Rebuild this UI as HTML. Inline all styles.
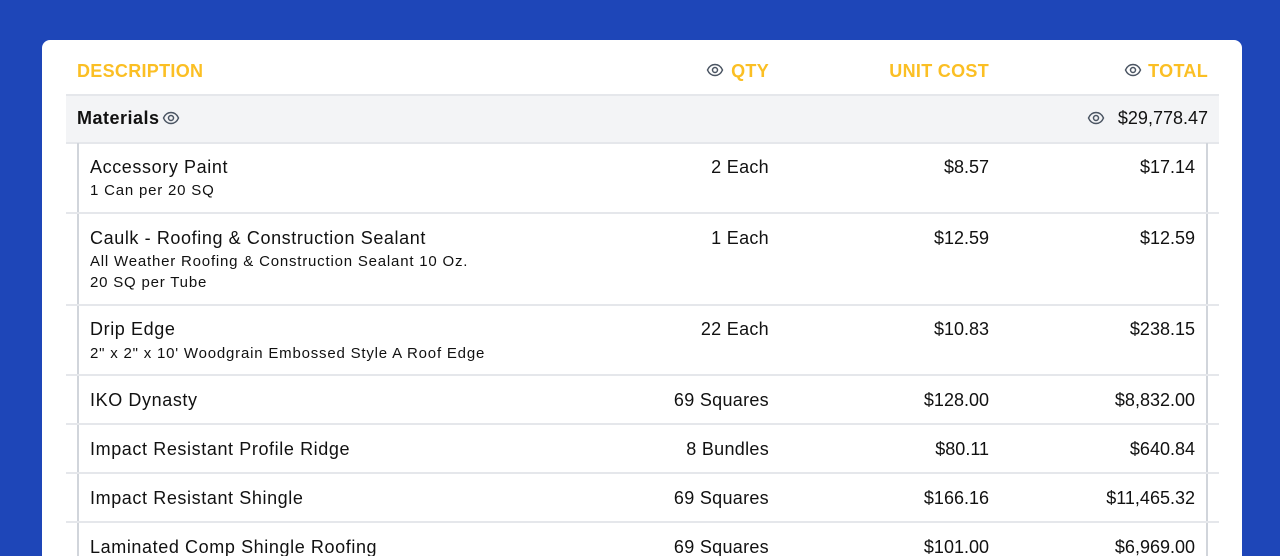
<!DOCTYPE html>
<html style="height:556px;overflow:hidden"><head><meta charset="utf-8"><style>
*{margin:0;padding:0;box-sizing:border-box}
body{width:1280px;height:556px;overflow:hidden;background:#1e46b8;font-family:"Liberation Sans",Arial,sans-serif;color:#111;position:relative}
.card{position:absolute;left:42px;top:40px;width:1200px;height:516px;background:#fff;border-radius:8px 8px 0 0}
.a{position:absolute;white-space:nowrap}
.h{font-weight:bold;font-size:18px;color:#fbbf24;top:61px;letter-spacing:0.3px}
.line{position:absolute;left:66px;width:1153px;height:2px;background:#e5e7eb}
.m{font-size:18px;letter-spacing:0.6px}
.s{font-size:15px;letter-spacing:0.8px}
.a.r{text-align:right;letter-spacing:0}
.a.r.q{letter-spacing:0.3px}
.a.h.r{letter-spacing:0.3px}
svg.eye{position:absolute}
</style></head><body>
<svg width="0" height="0" style="position:absolute"><defs><g id="e"><path d="M1.5 9C3.2 5 5.8 3.5 9 3.5s5.8 1.5 7.5 5.5C14.8 13 12.2 14.5 9 14.5S3.2 13 1.5 9z" fill="none" stroke="#4b5563" stroke-width="1.5"/><circle cx="9" cy="9" r="2.5" fill="none" stroke="#4b5563" stroke-width="1.5"/></g></defs></svg>
<div class="card"></div>
<div class="a h" style="left:77px">DESCRIPTION</div>
<svg class="eye" style="left:706px;top:61px" width="18" height="18"><use href="#e"/></svg>
<div class="a h r" style="right:511px">QTY</div>
<div class="a h r" style="right:291px">UNIT COST</div>
<svg class="eye" style="left:1124px;top:61px" width="18" height="18"><use href="#e"/></svg>
<div class="a h r" style="right:72px">TOTAL</div>
<div class="line" style="top:94px"></div>
<div class="a" style="left:66px;top:96px;width:1153px;height:47px;background:#f3f4f6"></div>
<div class="a m" style="left:77px;top:108px;font-weight:bold;letter-spacing:0.5px">Materials</div>
<svg class="eye" style="left:162px;top:109px" width="18" height="18"><use href="#e"/></svg>
<svg class="eye" style="left:1087px;top:109px" width="18" height="18"><use href="#e"/></svg>
<div class="a m r" style="right:72px;top:108px">$29,778.47</div>
<div class="line" style="top:142px"></div>
<div class="a" style="left:77px;top:143px;width:2px;height:413px;background:#d1d5db"></div>
<div class="a" style="left:1206px;top:143px;width:2px;height:413px;background:#d1d5db"></div>

<div class="a m" style="left:90px;top:157px">Accessory Paint</div>
<div class="a s" style="left:90px;top:182px">1 Can per 20 SQ</div>
<div class="a m r q" style="right:511px;top:157px">2 Each</div>
<div class="a m r" style="right:291px;top:157px">$8.57</div>
<div class="a m r" style="right:85px;top:157px">$17.14</div>
<div class="line" style="top:212px"></div>

<div class="a m" style="left:90px;top:228px">Caulk - Roofing &amp; Construction Sealant</div>
<div class="a s" style="left:90px;top:253px">All Weather Roofing &amp; Construction Sealant 10 Oz.</div>
<div class="a s" style="left:90px;top:274px">20 SQ per Tube</div>
<div class="a m r q" style="right:511px;top:228px">1 Each</div>
<div class="a m r" style="right:291px;top:228px">$12.59</div>
<div class="a m r" style="right:85px;top:228px">$12.59</div>
<div class="line" style="top:304px"></div>

<div class="a m" style="left:90px;top:319px">Drip Edge</div>
<div class="a s" style="left:90px;top:345px">2" x 2" x 10' Woodgrain Embossed Style A Roof Edge</div>
<div class="a m r q" style="right:511px;top:319px">22 Each</div>
<div class="a m r" style="right:291px;top:319px">$10.83</div>
<div class="a m r" style="right:85px;top:319px">$238.15</div>
<div class="line" style="top:374px"></div>

<div class="a m" style="left:90px;top:390px">IKO Dynasty</div>
<div class="a m r q" style="right:511px;top:390px">69 Squares</div>
<div class="a m r" style="right:291px;top:390px">$128.00</div>
<div class="a m r" style="right:85px;top:390px">$8,832.00</div>
<div class="line" style="top:423px"></div>

<div class="a m" style="left:90px;top:439px">Impact Resistant Profile Ridge</div>
<div class="a m r q" style="right:511px;top:439px">8 Bundles</div>
<div class="a m r" style="right:291px;top:439px">$80.11</div>
<div class="a m r" style="right:85px;top:439px">$640.84</div>
<div class="line" style="top:472px"></div>

<div class="a m" style="left:90px;top:488px">Impact Resistant Shingle</div>
<div class="a m r q" style="right:511px;top:488px">69 Squares</div>
<div class="a m r" style="right:291px;top:488px">$166.16</div>
<div class="a m r" style="right:85px;top:488px">$11,465.32</div>
<div class="line" style="top:521px"></div>

<div class="a m" style="left:90px;top:537px;height:19px;overflow:hidden">Laminated Comp Shingle Roofing</div>
<div class="a m r q" style="right:511px;top:537px;height:19px;overflow:hidden">69 Squares</div>
<div class="a m r" style="right:291px;top:537px;height:19px;overflow:hidden">$101.00</div>
<div class="a m r" style="right:85px;top:537px;height:19px;overflow:hidden">$6,969.00</div>
</body></html>
